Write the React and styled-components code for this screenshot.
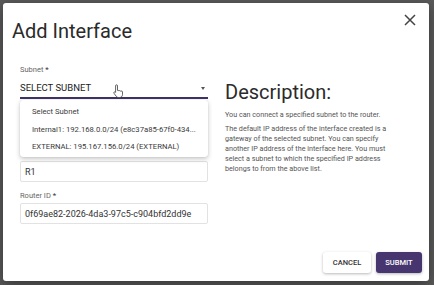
import React from "react";
import styled, { createGlobalStyle } from "styled-components";

const Global = createGlobalStyle`
  html, body { margin: 0; padding: 0; }
  body {
    width: 434px; height: 285px; overflow: hidden;
    font-family: Roboto, "Liberation Sans", sans-serif;
    background: #5a5a5a;
  }
  * { box-sizing: border-box; }
`;

const Backdrop = styled.div`
  width: 434px;
  height: 285px;
  padding: 3px 5px 4px 3px;
  display: flex;
`;

const Dialog = styled.div`
  position: relative;
  flex: 1;
  background: #fff;
  border-radius: 3px;
  box-shadow: 0 4px 14px rgba(0, 0, 0, 0.4);
  display: flex;
  flex-direction: column;
`;

const Header = styled.div`
  display: flex;
  justify-content: space-between;
  align-items: flex-start;
  padding: 16px 12px 0 9px;
`;

const Title = styled.h2`
  margin: 0;
  font-size: 20px;
  line-height: 24px;
  font-weight: 400;
  color: #2b2b2b;
`;

const CloseButton = styled.button`
  border: none;
  background: none;
  padding: 0;
  margin-top: -6px;
  width: 14px;
  height: 14px;
  display: flex;
  align-items: center;
  justify-content: center;
  cursor: pointer;
`;

const Body = styled.div`
  display: grid;
  grid-template-columns: 188px 1fr;
  column-gap: 17px;
  padding: 0 17px;
  margin-top: 22px;
`;

const FormColumn = styled.div`
  position: relative;
  display: flex;
  flex-direction: column;
`;

const Group = styled.div`
  display: flex;
  flex-direction: column;
  gap: ${(p) => (p.$tight ? "1px" : "2px")};
  margin-top: ${(p) => p.$mt || 0}px;
`;

const Label = styled.label`
  height: 10px;
  font-size: 7.5px;
  line-height: 10px;
  color: #666;
  & span { color: #333; font-size: 8px; }
`;

const Select = styled.div`
  height: 23px;
  padding: 6px 3px 0 0;
  border-bottom: 2px solid #3f3366;
  display: flex;
  justify-content: space-between;
  align-items: flex-start;
  font-size: 9.5px;
  line-height: 12px;
  color: #222;
  text-transform: uppercase;
`;

const Arrow = styled.span`
  margin-top: 5px;
  width: 0;
  height: 0;
  border-left: 2.5px solid transparent;
  border-right: 2.5px solid transparent;
  border-top: 3px solid #555;
`;

const Field = styled.div`
  height: 21px;
  border: 1px solid #e2e2e2;
  border-radius: 2px;
  padding: 0 4px;
  display: flex;
  align-items: center;
  font-size: 9px;
  color: #333;
`;

const Menu = styled.ul`
  position: absolute;
  left: 0;
  top: 35px;
  width: 188px;
  height: 57px;
  margin: 0;
  padding: 3px 0;
  list-style: none;
  background: #fff;
  border-radius: 3px;
  box-shadow: 0 2px 5px rgba(0, 0, 0, 0.22), 0 0 1px rgba(0, 0, 0, 0.2);
  z-index: 2;
`;

const MenuItem = styled.li`
  height: 17.5px;
  padding: 0 12px;
  display: flex;
  align-items: center;
  font-size: 7.7px;
  color: #3a3a3a;
  white-space: nowrap;
  overflow: hidden;
`;

const DescColumn = styled.div`
  display: flex;
  flex-direction: column;
`;

const DescTitle = styled.h3`
  margin: 15px 0 0;
  font-size: 20px;
  line-height: 24px;
  font-weight: 400;
  color: #2b2b2b;
`;

const Para = styled.p`
  margin: ${(p) => p.$mt}px 0 0;
  max-width: 175px;
  font-size: 7.2px;
  line-height: 10px;
  color: #555;
`;

const Footer = styled.div`
  margin-top: auto;
  display: flex;
  justify-content: flex-end;
  gap: 5px;
  padding: 0 7px 8px 0;
`;

const Button = styled.button`
  height: 21px;
  width: ${(p) => (p.$primary ? 46 : 48)}px;
  padding: 0;
  border: none;
  border-radius: 3px;
  font-family: Roboto, "Liberation Sans", sans-serif;
  font-size: 7.5px;
  font-weight: 500;
  background: ${(p) => (p.$primary ? "#46356f" : "#fff")};
  color: ${(p) => (p.$primary ? "#fff" : "#333")};
  box-shadow: 0 1px 3px rgba(0, 0, 0, 0.28);
`;

const Cursor = styled.svg`
  position: absolute;
  left: 110px;
  top: 81px;
  z-index: 3;
`;

export default function App() {
  return (
    <>
      <Global />
      <Backdrop>
        <Dialog>
          <Header>
            <Title>Add Interface</Title>
            <CloseButton aria-label="close">
              <svg width="12" height="12" viewBox="0 0 12 12">
                <path d="M1 1L11 11M11 1L1 11" stroke="#444" strokeWidth="1.5" />
              </svg>
            </CloseButton>
          </Header>
          <Body>
            <FormColumn>
              <Group $tight>
                <Label>
                  Subnet <span>*</span>
                </Label>
                <Select>
                  Select Subnet
                  <Arrow />
                </Select>
              </Group>
              <Group $mt={8}>
                <Label aria-label="IP Address" />
                <Field />
              </Group>
              <Group $mt={9}>
                <Label aria-label="Router Name" />
                <Field>R1</Field>
              </Group>
              <Group $mt={9}>
                <Label>
                  Router ID <span>*</span>
                </Label>
                <Field>0f69ae82-2026-4da3-97c5-c904bfd2dd9e</Field>
              </Group>
              <Menu>
                <MenuItem>Select Subnet</MenuItem>
                <MenuItem>Internal1: 192.168.0.0/24 (e8c37a85-67f0-434...</MenuItem>
                <MenuItem>EXTERNAL: 195.167.156.0/24 (EXTERNAL)</MenuItem>
              </Menu>
            </FormColumn>
            <DescColumn>
              <DescTitle>Description:</DescTitle>
              <Para $mt={6}>You can connect a specified subnet to the router.</Para>
              <Para $mt={4}>
                The default IP address of the interface created is a gateway of
                the selected subnet. You can specify another IP address of the
                interface here. You must select a subnet to which the specified IP
                address belongs to from the above list.
              </Para>
            </DescColumn>
          </Body>
          <Footer>
            <Button>CANCEL</Button>
            <Button $primary>SUBMIT</Button>
          </Footer>
          <Cursor width="11" height="14" viewBox="0 0 11 14">
            <path
              d="M3.5 0.8c.6 0 1 .4 1 1v4.6l.4-.1c.5 0 .9.3 1 .7.2-.3.5-.4.9-.4.4 0 .8.3.9.7.2-.2.5-.3.8-.3.6 0 1 .4 1 1v2.6c0 1.6-1.2 2.9-2.8 2.9H5.4c-.9 0-1.6-.4-2.1-1.1L1 9.3c-.3-.5-.2-1 .2-1.3.4-.3 1-.2 1.3.2l.1.1V1.8c0-.6.4-1 .9-1z"
              fill="#fff"
              stroke="#222"
              strokeWidth="0.7"
            />
          </Cursor>
        </Dialog>
      </Backdrop>
    </>
  );
}
